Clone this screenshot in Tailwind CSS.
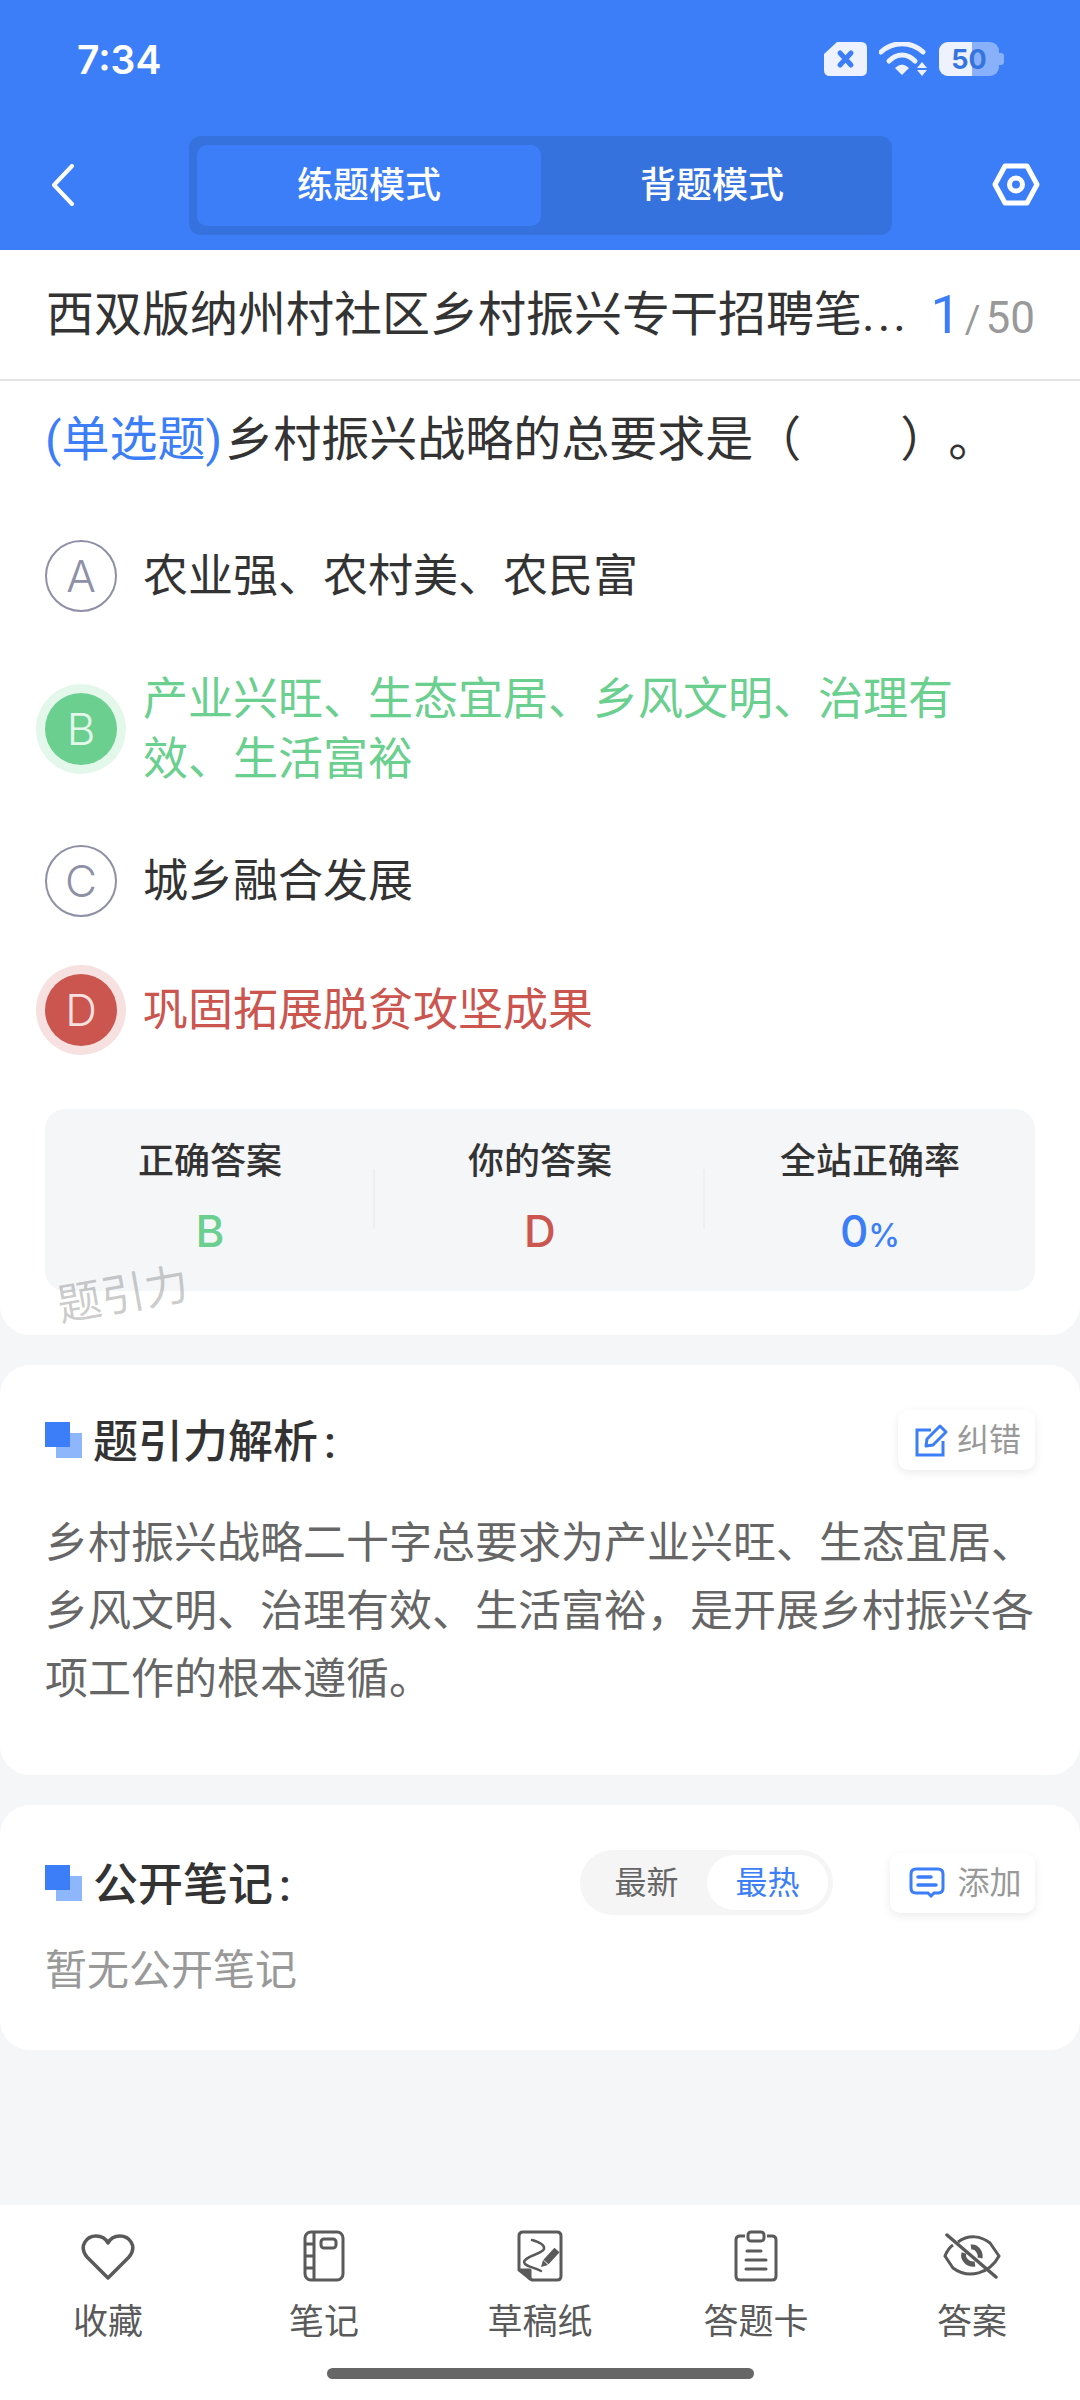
<!doctype html>
<html lang="zh">
<head>
<meta charset="utf-8">
<script src="https://cdn.jsdelivr.net/npm/@tailwindcss/browser@4"></script>
</head>
<body class="bg-[#f5f6f8]">
<div class="relative w-[1080px] h-[2400px] overflow-hidden bg-[#f5f6f8] font-['Roboto','Noto_Sans_CJK_SC',sans-serif] text-[#333] [text-spacing-trim:space-all]">

  <!-- header -->
  <header class="h-[250px] bg-[#3b7ef8] text-white">
    <div class="flex items-center justify-between h-[118px] pl-[77px] pr-[76px]">
      <span class="text-[39px] font-semibold font-['Inter',sans-serif] leading-none">7:34</span>
      <div class="flex items-center gap-[12px]">
        <svg width="43" height="34" viewBox="0 0 43 34"><path d="M13 0H37Q43 0 43 6V28Q43 34 37 34H6Q0 34 0 28V12Z" fill="#edf2fe"/><path d="M16 11L27 23M27 11L16 23" stroke="#3b7ef8" stroke-width="5" stroke-linecap="round"/></svg>
        <svg width="48" height="34" viewBox="0 0 48 34" fill="none"><path d="M2 10C14 -1 32 -1 44 10" stroke="#edf2fe" stroke-width="5" stroke-linecap="round"/><path d="M10 19C18 11 28 11 36 19" stroke="#edf2fe" stroke-width="5" stroke-linecap="round"/><path d="M16 26Q23 19 30 26L23 33Z" fill="#edf2fe"/><path d="M38 26L43 20L48 26ZM38 28H48L43 34Z" fill="#edf2fe"/></svg>
        <div class="relative w-[65px] h-[34px] flex items-center">
          <div class="absolute left-0 top-0 w-[60px] h-[34px] rounded-[9px] bg-white/40"></div>
          <div class="absolute right-0 top-[11px] w-[5px] h-[12px] rounded-r-[3px] bg-white/40"></div>
          <div class="absolute left-0 top-0 w-[33px] h-[34px] rounded-l-[9px] bg-[#edf2fe]"></div>
          <span class="relative w-[60px] text-center text-[27px] font-bold font-['Inter',sans-serif] leading-none text-[#3674dd]">50</span>
        </div>
      </div>
    </div>
    <div class="relative flex items-start justify-center h-[132px] pt-[18px]">
      <svg class="absolute left-[51px] top-[46px]" width="24" height="42" viewBox="0 0 24 42" fill="none"><path d="M21 2L3 21L21 40" stroke="#fff" stroke-width="4" stroke-linecap="round" stroke-linejoin="round"/></svg>
      <div class="flex w-[703px] h-[99px] ml-[1px] rounded-[12px] bg-[#3672de] pl-[8px] pt-[9px] pb-[9px]">
        <div class="flex items-center justify-center w-[344px] rounded-[10px] bg-[#3b7ef8] text-[36px] font-medium">练题模式</div>
        <div class="flex items-center justify-center w-[342px] text-[36px] font-medium">背题模式</div>
      </div>
      <svg class="absolute left-[992px] top-[45px]" width="48" height="43" viewBox="0 0 48 43" fill="none"><path d="M13 3H35L45 21.500L35 40H13L3 21.500Z" stroke="#fff" stroke-width="5" stroke-linejoin="round"/><circle cx="24" cy="21.500" r="6.500" stroke="#fff" stroke-width="5"/></svg>
    </div>
  </header>

  <!-- question card -->
  <section class="relative h-[1085px] bg-white rounded-b-[30px]">
    <div class="flex items-center justify-between h-[131px] pl-[46px] pr-[45px] border-b-2 border-[#e3e3e3]">
      <span class="text-[48px] leading-none whitespace-nowrap">西双版纳州村社区乡村振兴专干招聘笔<span class="tracking-[3px]">...</span></span>
      <span class="flex items-baseline leading-none text-[#999]"><span class="text-[54px] text-[#3b7ef8]">1</span><span class="text-[38px] ml-[4px]">/</span><span class="text-[44px] ml-[5px]">50</span></span>
    </div>
    <p class="mt-[29px] pl-[45px] text-[48px] leading-[60px] whitespace-nowrap"><span class="text-[#3b7ef8] mr-[3px]">(单选题)</span>乡村振兴战略的总要求是（<span class="inline-block w-[99px]"></span>）。</p>

    <ul class="mt-[70px] flex flex-col gap-[57px] pl-[45px] pr-[80px] text-[45px]">
      <li class="flex items-center gap-[26px] h-[72px]">
        <span class="shrink-0 flex items-center justify-center w-[72px] h-[72px] rounded-full border-2 border-[#8e90a6] text-[#8e90a6] text-[44px] font-light font-['Inter',sans-serif]">A</span>
        <span class="pt-[2px]">农业强、农村美、农民富</span>
      </li>
      <li class="flex items-center gap-[26px] h-[119px] text-[#6bcf8f]">
        <span class="shrink-0 flex items-center justify-center w-[72px] h-[72px] rounded-full bg-[#6bcf8f] text-[#e4f7eb] text-[44px] font-light font-['Inter',sans-serif] ring-[9px] ring-[#e4f7eb]">B</span>
        <span class="pt-[2px] leading-[60px]">产业兴旺、生态宜居、乡风文明、治理有效、生活富裕</span>
      </li>
      <li class="flex items-center gap-[26px] h-[72px]">
        <span class="shrink-0 flex items-center justify-center w-[72px] h-[72px] rounded-full border-2 border-[#8e90a6] text-[#8e90a6] text-[44px] font-light font-['Inter',sans-serif]">C</span>
        <span class="pt-[2px]">城乡融合发展</span>
      </li>
      <li class="flex items-center gap-[26px] h-[72px] text-[#cb554f]">
        <span class="shrink-0 flex items-center justify-center w-[72px] h-[72px] rounded-full bg-[#cb554f] text-[#f6e1e0] text-[44px] font-light font-['Inter',sans-serif] ring-[9px] ring-[#f6e1e0]">D</span>
        <span class="pt-[2px]">巩固拓展脱贫攻坚成果</span>
      </li>
    </ul>

    <div class="mt-[63px] mx-[45px] grid grid-cols-3 h-[182px] rounded-[20px] bg-[#f5f6f8]">
      <div class="flex flex-col items-center pt-[33px]">
        <span class="text-[36px] leading-[40px] font-medium">正确答案</span>
        <span class="mt-[29px] text-[44px] leading-[40px] font-medium font-['Inter',sans-serif] text-[#6bcf8f]">B</span>
      </div>
      <div class="relative flex flex-col items-center pt-[33px] before:absolute before:left-[-2px] before:top-[60px] before:h-[60px] before:w-[2px] before:bg-[#eeeff2] after:absolute after:right-0 after:top-[60px] after:h-[60px] after:w-[2px] after:bg-[#eeeff2]">
        <span class="text-[36px] leading-[40px] font-medium">你的答案</span>
        <span class="mt-[29px] text-[44px] leading-[40px] font-medium font-['Inter',sans-serif] text-[#cb554f]">D</span>
      </div>
      <div class="flex flex-col items-center pt-[33px]">
        <span class="text-[36px] leading-[40px] font-medium">全站正确率</span>
        <span class="mt-[29px] text-[44px] leading-[40px] font-medium font-['Inter',sans-serif] text-[#3b7ef8]">0<span class="text-[32px]">%</span></span>
      </div>
    </div>

    <span class="absolute left-[57px] top-[1023px] -rotate-[10deg] text-[44px] leading-none text-[#333]/25">题引力</span>
  </section>

  <!-- analysis -->
  <section class="mt-[30px] h-[410px] bg-white rounded-[30px] px-[45px] pt-[45px]">
    <div class="flex items-center justify-between h-[60px]">
      <div class="flex items-center">
        <span class="relative block w-[37px] h-[36px] mr-[11px]">
          <span class="absolute left-[11px] top-[11px] w-[26px] h-[25px] bg-[#8db6fb]"></span>
          <span class="absolute left-0 top-0 w-[25px] h-[25px] bg-[#3b7ef8]"></span>
        </span>
        <h2 class="relative top-[3px] text-[45px] font-medium">题引力解析<span class="ml-[6px]">:</span></h2>
      </div>
      <button class="flex items-center justify-center w-[137px] h-[60px] pl-[3px] rounded-[10px] bg-white shadow-[0_3px_10px_rgba(0,0,0,0.08)] text-[32px] text-[#999]">
        <svg class="mr-[8px]" width="34" height="34" viewBox="0 0 34 34" fill="none"><path d="M16 7H2V32H28V18" stroke="#3b7ef8" stroke-width="3"/><path d="M11 23L12 16L25 3L31 9L18 22Z" stroke="#3b7ef8" stroke-width="3" stroke-linejoin="round"/></svg>
        纠错
      </button>
    </div>
    <p class="mt-[39px] text-[43px] leading-[68px] text-[#666]">乡村振兴战略二十字总要求为产业兴旺、生态宜居、乡风文明、治理有效、生活富裕，是开展乡村振兴各项工作的根本遵循。</p>
  </section>

  <!-- notes -->
  <section class="mt-[30px] h-[245px] bg-white rounded-[30px] px-[45px] pt-[45px]">
    <div class="flex items-center h-[65px]">
      <span class="relative block w-[37px] h-[36px] mr-[11px]">
        <span class="absolute left-[11px] top-[11px] w-[26px] h-[25px] bg-[#8db6fb]"></span>
        <span class="absolute left-0 top-0 w-[25px] h-[25px] bg-[#3b7ef8]"></span>
      </span>
      <h2 class="relative top-[3px] text-[45px] font-medium">公开笔记<span class="ml-[6px]">:</span></h2>
      <div class="ml-auto flex items-center h-[65px] w-[253px] rounded-full bg-[#f5f5f5] text-[32px] text-[#666] pr-[5px]">
        <span class="flex-1 text-center pl-[6px]">最新</span>
        <span class="flex items-center justify-center w-[121px] h-[55px] rounded-full bg-white text-[#3b7ef8]">最热</span>
      </div>
      <button class="ml-[57px] flex items-center justify-center w-[145px] h-[60px] pl-[6px] rounded-[10px] bg-white shadow-[0_3px_10px_rgba(0,0,0,0.08)] text-[32px] text-[#999]">
        <svg class="mr-[12px]" width="36" height="31" viewBox="0 0 36 31" fill="none"><path d="M7 2H29Q34 2 34 7V21Q34 26 29 26H25L22 29L19 26H7Q2 26 2 21V7Q2 2 7 2Z" stroke="#3b7ef8" stroke-width="3"/><path d="M9 10H22M9 18H27" stroke="#3b7ef8" stroke-width="3.500" stroke-linecap="round"/></svg>
        添加
      </button>
    </div>
    <p class="mt-[26px] text-[42px] leading-[60px] text-[#999]">暂无公开笔记</p>
  </section>

  <!-- bottom bar -->
  <nav class="absolute left-0 bottom-0 w-full h-[195px] bg-white">
    <div class="grid grid-cols-5 text-[35px] text-[#5a5a5a]">
      <div class="flex flex-col items-center">
        <div class="flex items-center justify-center h-[54px] mt-[24px]"><svg class="relative top-[1px]" width="54" height="48" viewBox="0 0 54 48" fill="none"><path d="M27 45L6 24C-3 13 6 3 15 3C21 3 25 6 27 10C29 6 33 3 39 3C48 3 57 13 48 24Z" stroke="#5a5a5a" stroke-width="3.500" stroke-linejoin="round"/></svg></div>
        <span class="mt-[15px] leading-[50px]">收藏</span>
      </div>
      <div class="flex flex-col items-center">
        <div class="flex items-center justify-center h-[54px] mt-[24px]"><svg width="42" height="52" viewBox="0 0 42 52" fill="none" stroke="#5a5a5a" stroke-width="3"><rect x="2" y="2" width="38" height="48" rx="6"/><path d="M11 2V50M2 14H11M2 26H11M2 38H11"/><rect x="18" y="9" width="15" height="9" rx="3"/></svg></div>
        <span class="mt-[15px] leading-[50px]">笔记</span>
      </div>
      <div class="flex flex-col items-center">
        <div class="flex items-center justify-center h-[54px] mt-[24px]"><svg width="46" height="52" viewBox="0 0 46 52" fill="none" stroke="#5a5a5a" stroke-width="3"><path d="M15 50H40Q44 50 44 46V6Q44 2 40 2H6Q2 2 2 6V40Z" stroke-linejoin="round"/><path d="M3 40H13V49Z" fill="#5a5a5a" stroke-linejoin="round"/><path d="M15 10C22 12 28 15 27 19C25 24 8 26 7 32C8 37 17 37 24 41" stroke-width="2.500" stroke-linecap="round"/><path d="M29 32L40 20" stroke-width="7"/><path d="M24 37L26 30L31 35Z" fill="#5a5a5a" stroke="none"/></svg></div>
        <span class="mt-[15px] leading-[50px]">草稿纸</span>
      </div>
      <div class="flex flex-col items-center">
        <div class="flex items-center justify-center h-[54px] mt-[24px]"><svg width="44" height="52" viewBox="0 0 44 52" fill="none" stroke="#5a5a5a" stroke-width="3"><path d="M11 6H6Q2 6 2 10V46Q2 50 6 50H38Q42 50 42 46V10Q42 6 38 6H33"/><rect x="14" y="2" width="16" height="9" rx="3"/><path d="M13 21H27M12 30H32M12 39H32" stroke-linecap="round"/></svg></div>
        <span class="mt-[15px] leading-[50px]">答题卡</span>
      </div>
      <div class="flex flex-col items-center">
        <div class="flex items-center justify-center h-[54px] mt-[24px]"><svg width="58" height="46" viewBox="0 0 58 46" fill="none" stroke="#5a5a5a" stroke-width="3"><path d="M15 9C26 1 38 3 47 10L56 23C47 40 26 47 10 35L2 23C4 18 7 14 10 12"/><path d="M4 2L53 44" stroke-width="3.500" stroke-linecap="round"/><path d="M21 20C19 26 25 32 32 31M28 14C34 13 38 20 37 25" stroke-width="5"/></svg></div>
        <span class="mt-[15px] leading-[50px]">答案</span>
      </div>
    </div>
    <div class="absolute left-[327px] top-[163px] w-[427px] h-[11px] rounded-full bg-[#666]"></div>
  </nav>
</div>
</body>
</html>
